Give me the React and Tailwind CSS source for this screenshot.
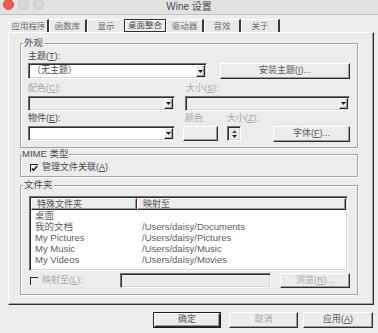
import React from "react";

const sunken =
  "border border-t-[#707070] border-l-[#707070] border-r-white border-b-white shadow-[inset_1px_1px_0_#2e2e2e,inset_-1px_-1px_0_#d6d6d6]";
const raised =
  "border border-t-white border-l-white border-r-[#2e2e2e] border-b-[#2e2e2e] shadow-[inset_-1px_-1px_0_#9a9a9a]";
const etched =
  "border border-[#a3a3a3] shadow-[inset_1px_1px_0_#fff,1px_1px_0_#fff]";

function Arrow() {
  return (
    <div className={`w-[9px] my-[1px] mr-[1px] flex items-center justify-center bg-[#ececec] ${raised}`}>
      <svg width="5" height="3" viewBox="0 0 5 3">
        <path d="M0 0h5L2.5 3z" fill="#1e1e1e" />
      </svg>
    </div>
  );
}

function Combo({ className, children }) {
  return (
    <div className={`flex ${sunken} ${className}`}>
      <div className="flex-1 pl-[3px] flex items-center text-[#4a4a4a] whitespace-nowrap overflow-hidden">
        {children}
      </div>
      <Arrow />
    </div>
  );
}

function Btn({ className, dim, children }) {
  return (
    <div
      className={`flex items-center justify-center bg-[#ececec] whitespace-nowrap ${raised} ${className} ${
        dim ? "text-[#a8a8a8]" : "text-[#5a5a5a]"
      }`}
    >
      {children}
    </div>
  );
}

function Check({ checked }) {
  return (
    <div className="w-[8px] h-[8px] border-t border-l border-[#2a2a2a] flex items-center justify-center shrink-0">
      {checked && (
        <svg width="7" height="7" viewBox="0 0 7 7">
          <path d="M0.8 3.4L2.6 5.3L6.3 1" stroke="#1a1a1a" strokeWidth="1.4" fill="none" />
        </svg>
      )}
    </div>
  );
}

function Group({ label, className, labelPos, children }) {
  return (
    <div className={`relative ${etched} ${className}`}>
      <span
        className={`absolute -top-[7px] px-[1px] bg-[#ececec] leading-[12px] text-[#4a4a4a] text-[9.5px] ${labelPos}`}
      >
        {label}
      </span>
      {children}
    </div>
  );
}

function Tab({ label, w, noSep }) {
  return (
    <div
      className={`h-[13px] flex items-center justify-center border-t border-l border-t-white border-l-white bg-[#e9e9e9] text-[#6a6a6a] text-[8.5px] ${w} ${
        noSep ? "" : "border-r-2 border-r-[#3a3a3a]"
      }`}
    >
      {label}
    </div>
  );
}

export default function App() {
  const rows = [
    ["桌面", ""],
    ["我的文档", "/Users/daisy/Documents"],
    ["My Pictures", "/Users/daisy/Pictures"],
    ["My Music", "/Users/daisy/Music"],
    ["My Videos", "/Users/daisy/Movies"],
  ];
  return (
    <div className="w-[378px] h-[333px] bg-[#ececec] overflow-hidden flex flex-col text-[9px] text-[#4a4a4a] font-['Liberation_Sans','Noto_Sans_CJK_SC',sans-serif]">
      {/* title bar */}
      <div className="h-[15px] shrink-0 grid grid-cols-[1fr_auto_1fr] bg-[#e2e2e2] border-b border-[#c4c4c4]">
        <div className="flex items-start pl-[3px] gap-[4px] -mt-[1px]">
          <div className="w-[11px] h-[11px] rounded-full bg-[#f05a52] border border-[#d9453e]" />
          <div className="w-[11px] h-[11px] rounded-full bg-[#d8d8d8] border border-[#c6c6c6]" />
          <div className="w-[11px] h-[11px] rounded-full bg-[#d8d8d8] border border-[#c6c6c6]" />
        </div>
        <div className="text-[10px] leading-[14px] text-[#4a4a4a]">Wine 设置</div>
        <div />
      </div>

      {/* tabs */}
      <div className="mt-[4px] pl-[9px] flex h-[13px] shrink-0">
        <Tab label="应用程序" w="w-[40px]" />
        <Tab label="函数库" w="w-[38px]" />
        <Tab label="显示" w="w-[37px]" noSep />
        <div className="w-[42px] h-[13px] flex items-center justify-center border border-[#2e2e2e] bg-[#ececec] text-[#4a4a4a] text-[8.5px] shadow-[inset_1px_1px_0_#fff]">
          桌面整合
        </div>
        <Tab label="驱动器" w="w-[38px]" />
        <Tab label="音效" w="w-[37px]" />
        <Tab label="关于" w="w-[39px]" />
      </div>

      {/* panel */}
      <div className="ml-[8px] w-[366px] h-[273px] shrink-0 border border-t-white border-l-white border-r-[#2e2e2e] border-b-[#2e2e2e] shadow-[inset_-1px_-1px_0_#a0a0a0] pl-[11px] pt-[10px] flex flex-col">
        {/* 外观 */}
        <Group label="外观" labelPos="left-[2px]" className="w-[338px] h-[105px] pl-[7px] pt-[6px] flex flex-col">
          <div className="h-[13px] leading-[13px]">
            主题(<u>T</u>):
          </div>
          <div className="flex h-[16px]">
            <Combo className="w-[179px] h-[16px] bg-white">（无主题）</Combo>
            <Btn className="ml-[13px] w-[130px] h-[16px]">安装主题(<u>I</u>)...</Btn>
          </div>
          <div className="mt-[3px] h-[13px] leading-[13px] flex text-[#a8a8a8]">
            <span className="w-[158px]">
              配色(<u>C</u>):
            </span>
            <span>
              大小(<u>S</u>):
            </span>
          </div>
          <div className="mt-[1px] flex h-[15px]">
            <Combo className="w-[147px] h-[15px] bg-[#ececec]" />
            <Combo className="ml-[10px] w-[165px] h-[15px] bg-[#ececec]" />
          </div>
          <div className="mt-[1px] h-[13px] leading-[13px] flex">
            <span className="w-[157px]">
              物件(<u>E</u>):
            </span>
            <span className="w-[42px] text-[#a8a8a8]">颜色</span>
            <span className="text-[#a8a8a8]">
              大小(<u>Z</u>):
            </span>
          </div>
          <div className="flex items-center h-[17px]">
            <Combo className="w-[147px] h-[15px] bg-white" />
            <div className={`ml-[8px] w-[35px] h-[15px] bg-[#ececec] ${raised}`} />
            <div className={`ml-[9px] w-[14px] h-[15px] bg-[#ececec] ${sunken} flex flex-col items-center justify-center gap-[2px]`}>
              <svg width="5" height="3" viewBox="0 0 5 3">
                <path d="M0 3h5L2.5 0z" fill="#555" />
              </svg>
              <svg width="5" height="3" viewBox="0 0 5 3">
                <path d="M0 0h5L2.5 3z" fill="#222" />
              </svg>
            </div>
            <Btn className="ml-[32px] w-[77px] h-[16px]">字体(<u>F</u>)...</Btn>
          </div>
        </Group>

        {/* MIME */}
        <Group label="MIME 类型" labelPos="left-0" className="mt-[6px] w-[338px] h-[23px] pl-[9px] pt-[7px]">
          <div className="flex items-center h-[11px] gap-[4px]">
            <Check checked />
            <span className="leading-[11px]">
              管理文件关联(<u>A</u>)
            </span>
          </div>
        </Group>

        {/* 文件夹 */}
        <Group label="文件夹" labelPos="left-[2px]" className="mt-[8px] w-[338px] h-[110px] pl-[8px] pt-[10px] flex flex-col">
          <div className={`w-[319px] h-[75px] bg-white ${sunken} flex flex-col`}>
            <div className="flex h-[12px] shrink-0 ml-[1px] mt-[1px]">
              <div className={`w-[106px] h-[12px] bg-[#ececec] ${raised} pl-[5px] leading-[10px] text-[#555]`}>特殊文件夹</div>
              <div className={`flex-1 mr-[1px] h-[12px] bg-[#ececec] ${raised} pl-[5px] leading-[10px] text-[#555]`}>映射至</div>
            </div>
            {rows.map(([a, b]) => (
              <div key={a} className="flex h-[11px] leading-[11px] text-[9.5px] text-[#5e5e5e]">
                <span className="w-[112px] pl-[5px] whitespace-nowrap">{a}</span>
                <span className="whitespace-nowrap">{b}</span>
              </div>
            ))}
          </div>
          <div className="mt-[2px] flex items-center h-[15px]">
            <div className="ml-[1px]">
              <Check />
            </div>
            <span className="ml-[4px] w-[78px] text-[#a8a8a8]">
              映射至(<u>L</u>):
            </span>
            <div className={`w-[151px] h-[15px] bg-[#ececec] ${sunken}`} />
            <Btn dim className="ml-[9px] w-[70px] h-[15px]">
              浏览(<u>R</u>)...
            </Btn>
          </div>
        </Group>
      </div>

      {/* bottom buttons */}
      <div className="mt-[7px] flex justify-end pr-[5px]">
        <div className="w-[68px] h-[16px] border border-[#1e1e1e] flex">
          <Btn className="flex-1 h-full">确定</Btn>
        </div>
        <Btn dim className="ml-[8px] w-[69px] h-[16px]">
          取消
        </Btn>
        <Btn className="ml-[5px] w-[70px] h-[16px]">
          应用(<u>A</u>)
        </Btn>
      </div>
    </div>
  );
}
